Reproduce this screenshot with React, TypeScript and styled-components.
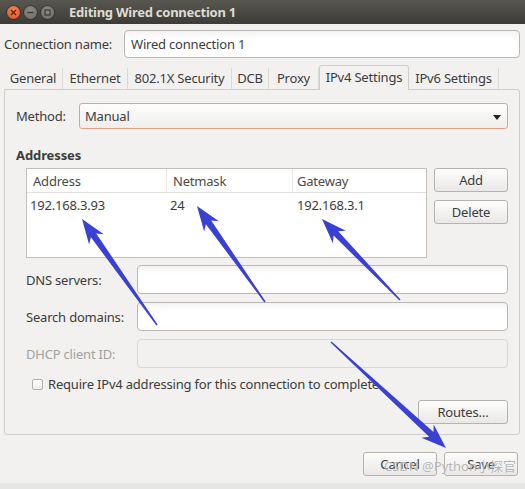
import React from "react";
import styled, { createGlobalStyle } from "styled-components";

const Global = createGlobalStyle`
  html, body { margin: 0; padding: 0; background: #f2f1f0; }
  body { width: 525px; height: 489px; overflow: hidden; }
  * { box-sizing: border-box; }
`;

const Window = styled.div`
  position: relative;
  width: 525px;
  height: 489px;
  background: #f2f1f0;
  display: flex;
  flex-direction: column;
  font-family: "Noto Sans", "DejaVu Sans", sans-serif;
  font-size: 13px;
  letter-spacing: -0.2px;
  color: #3c3c3c;
  overflow: hidden;
`;

const TitleBar = styled.div`
  height: 24px;
  flex: none;
  background: linear-gradient(#58574f, #3c3b37);
  display: flex;
  align-items: center;
  padding-left: 7px;
  gap: 4px;
`;

const WinButton = styled.div<{ $kind: "close" | "min" | "max" }>`
  width: 13px;
  height: 13px;
  border-radius: 50%;
  display: flex;
  align-items: center;
  justify-content: center;
  background: ${(p) =>
    p.$kind === "close"
      ? "radial-gradient(circle at 50% 35%, #f4895c, #df4b17)"
      : "radial-gradient(circle at 50% 35%, #8d8c87, #6a6964)"};
  box-shadow: 0 0 0 1px rgba(0, 0, 0, 0.25);
`;

const Title = styled.div`
  margin-left: 11px;
  color: #dfdbd2;
  font-weight: bold;
  font-size: 13px;
  letter-spacing: -0.25px;
`;

const Content = styled.div`
  padding: 0 5px 0 4px;
  display: flex;
  flex-direction: column;
`;

const NameRow = styled.div`
  margin-top: 6px;
  height: 28px;
  display: flex;
  align-items: center;
`;

const NameLabel = styled.div`
  width: 120px;
`;

const TextInput = styled.div<{ $disabled?: boolean }>`
  flex: 1;
  height: 100%;
  border: 1px solid ${(p) => (p.$disabled ? "#d9d7d3" : "#bbb8b3")};
  border-radius: 4px;
  background: ${(p) =>
    p.$disabled ? "#f2f1f0" : "linear-gradient(#f3f3f3, #ffffff 30%)"};
  display: flex;
  align-items: center;
  padding-left: 6px;
  color: #3c3c3c;
`;

const TabStrip = styled.div`
  margin-top: 7px;
  height: 24px;
  display: flex;
  align-items: flex-end;
  position: relative;
  z-index: 1;
`;

const Tab = styled.div<{ $w: number; $active?: boolean }>`
  width: ${(p) => p.$w}px;
  height: ${(p) => (p.$active ? 25 : 21)}px;
  margin-bottom: ${(p) => (p.$active ? -1 : 0)}px;
  display: flex;
  align-items: center;
  justify-content: center;
  padding-bottom: ${(p) => (p.$active ? 3 : 2)}px;
  border-right: 1px solid #dcdad6;
  ${(p) =>
    p.$active &&
    `
    border: 1px solid #cfcdc9;
    border-bottom: none;
    border-radius: 3px 3px 0 0;
    background: #f2f1f0;
  `}
`;

const Panel = styled.div`
  height: 346px;
  border: 1px solid #cfcdc9;
  border-radius: 0 3px 3px 3px;
  padding: 13px 11px 0 11px;
  display: flex;
  flex-direction: column;
`;

const MethodRow = styled.div`
  height: 26px;
  display: flex;
  align-items: center;
`;

const MethodLabel = styled.div`
  width: 63px;
`;

const Combo = styled.div`
  position: relative;
  flex: 1;
  height: 100%;
  border: 1px solid #e3a185;
  border-radius: 3px;
  background: linear-gradient(#fdfdfd, #efeeed);
  display: flex;
  align-items: center;
  padding-left: 5px;
`;

const ComboArrow = styled.div`
  position: absolute;
  right: 6px;
  top: 11px;
  width: 0;
  height: 0;
  border-left: 4px solid transparent;
  border-right: 4px solid transparent;
  border-top: 5px solid #222;
`;

const SectionTitle = styled.div`
  margin-top: 18px;
  line-height: 17px;
  font-weight: bold;
  letter-spacing: -0.1px;
`;

const AddrRow = styled.div`
  margin: 4px 0 0 10px;
  display: flex;
  gap: 7px;
`;

const Table = styled.div`
  width: 401px;
  height: 90px;
  background: #fff;
  border: 1px solid #c2bfba;
  display: flex;
  flex-direction: column;
`;

const TRow = styled.div<{ $header?: boolean }>`
  display: grid;
  grid-template-columns: 140px 126px 1fr;
  height: ${(p) => (p.$header ? 24 : 22)}px;
  ${(p) => p.$header && "border-bottom: 1px solid #e2e0dd;"}
`;

const HeadCell = styled.div`
  display: flex;
  align-items: center;
  padding-left: 6px;
  color: #4a4a4a;
  border-right: 1px solid #e8e6e3;
  &:last-child { border-right: none; padding-left: 4px; }
`;

const Cell = styled.div`
  display: flex;
  align-items: center;
  padding: 0 0 0 3px;
  margin-top: 1px;
  &:last-child { padding-left: 4px; }
`;

const ButtonCol = styled.div`
  display: flex;
  flex-direction: column;
  gap: 8px;
`;

const Button = styled.div<{ $w?: number }>`
  width: ${(p) => p.$w ?? 74}px;
  height: 24px;
  border: 1px solid #b6b3ae;
  border-radius: 3px;
  background: linear-gradient(#fdfdfd, #e9e8e6);
  display: flex;
  align-items: center;
  justify-content: center;
  box-shadow: inset 0 1px 0 #fff;
`;

const FormGrid = styled.div`
  margin: 7px 0 0 10px;
  display: grid;
  grid-template-columns: 111px 1fr;
  grid-auto-rows: 29px;
  row-gap: 8px;
`;

const FormLabel = styled.div<{ $disabled?: boolean }>`
  display: flex;
  align-items: center;
  color: ${(p) => (p.$disabled ? "#a3a19d" : "#3c3c3c")};
`;

const CheckRow = styled.div`
  margin: 10px 0 0 16px;
  height: 12px;
  display: flex;
  align-items: center;
  gap: 5px;
`;

const CheckBox = styled.div`
  width: 11px;
  height: 11px;
  border: 1px solid #b4b1ad;
  border-radius: 2px;
  background: linear-gradient(#fff, #eeedec);
`;

const RoutesWrap = styled.div`
  margin-top: 10px;
  display: flex;
  justify-content: flex-end;
`;

const Footer = styled.div`
  margin-top: 17px;
  padding-right: 2px;
  display: flex;
  justify-content: flex-end;
  gap: 7px;
`;

const BottomStrip = styled.div`
  margin-top: auto;
  height: 6px;
  background: #e6e6e5;
`;

const Watermark = styled.div`
  position: absolute;
  left: 384px;
  top: 456px;
  white-space: nowrap;
  font-size: 13px;
  letter-spacing: 0;
  color: rgba(150, 150, 150, 0.7);
  font-family: "Noto Sans", "Noto Sans CJK SC", sans-serif;
  text-shadow: 0 0 1px rgba(255, 255, 255, 0.8);
  pointer-events: none;
`;

const Overlay = styled.svg`
  position: absolute;
  left: 0;
  top: 0;
  pointer-events: none;
`;

function arrowPoints(tx: number, ty: number, px: number, py: number): string {
  const dx = px - tx;
  const dy = py - ty;
  const len = Math.hypot(dx, dy);
  const ux = dx / len;
  const uy = dy / len;
  const nx = -uy;
  const ny = ux;
  const L = 20;
  const back = 5;
  const W = 9;
  const sw = 3.2;
  const tw = 0.7;
  const nb = { x: px - ux * L, y: py - uy * L };
  const bb = { x: px - ux * (L + back), y: py - uy * (L + back) };
  const pts = [
    [px, py],
    [bb.x + nx * W, bb.y + ny * W],
    [nb.x + nx * sw, nb.y + ny * sw],
    [tx + nx * tw, ty + ny * tw],
    [tx - nx * tw, ty - ny * tw],
    [nb.x - nx * sw, nb.y - ny * sw],
    [bb.x - nx * W, bb.y - ny * W],
  ];
  return pts.map((p) => `${p[0].toFixed(1)},${p[1].toFixed(1)}`).join(" ");
}

const arrows: [number, number, number, number][] = [
  [157, 325, 82, 219],
  [265, 302, 197, 206],
  [400, 300, 322, 219],
  [331, 342, 446, 448],
];

const tabs = [
  { label: "General", w: 59 },
  { label: "Ethernet", w: 65 },
  { label: "802.1X Security", w: 104 },
  { label: "DCB", w: 37 },
  { label: "Proxy", w: 50 },
  { label: "IPv4 Settings", w: 90, active: true },
  { label: "IPv6 Settings", w: 90 },
];

export default function App() {
  return (
    <Window>
      <Global />
      <TitleBar>
        <WinButton $kind="close">
          <svg width="7" height="7" viewBox="0 0 7 7">
            <path d="M1 1L6 6M6 1L1 6" stroke="#5a1c08" strokeWidth="1.3" />
          </svg>
        </WinButton>
        <WinButton $kind="min">
          <svg width="7" height="7" viewBox="0 0 7 7">
            <path d="M0.5 3.5H6.5" stroke="#3a3935" strokeWidth="1.5" />
          </svg>
        </WinButton>
        <WinButton $kind="max">
          <svg width="7" height="7" viewBox="0 0 7 7">
            <rect x="1" y="1" width="5" height="5" fill="none" stroke="#3a3935" strokeWidth="1.2" />
          </svg>
        </WinButton>
        <Title>Editing Wired connection 1</Title>
      </TitleBar>
      <Content>
        <NameRow>
          <NameLabel>Connection name:</NameLabel>
          <TextInput>Wired connection 1</TextInput>
        </NameRow>
        <TabStrip>
          {tabs.map((t) => (
            <Tab key={t.label} $w={t.w} $active={t.active}>
              {t.label}
            </Tab>
          ))}
        </TabStrip>
        <Panel>
          <MethodRow>
            <MethodLabel>Method:</MethodLabel>
            <Combo>
              Manual
              <ComboArrow />
            </Combo>
          </MethodRow>
          <SectionTitle>Addresses</SectionTitle>
          <AddrRow>
            <Table>
              <TRow $header>
                <HeadCell>Address</HeadCell>
                <HeadCell>Netmask</HeadCell>
                <HeadCell>Gateway</HeadCell>
              </TRow>
              <TRow>
                <Cell>192.168.3.93</Cell>
                <Cell>24</Cell>
                <Cell>192.168.3.1</Cell>
              </TRow>
            </Table>
            <ButtonCol>
              <Button>Add</Button>
              <Button>Delete</Button>
            </ButtonCol>
          </AddrRow>
          <FormGrid>
            <FormLabel>DNS servers:</FormLabel>
            <TextInput />
            <FormLabel>Search domains:</FormLabel>
            <TextInput />
            <FormLabel $disabled>DHCP client ID:</FormLabel>
            <TextInput $disabled />
          </FormGrid>
          <CheckRow>
            <CheckBox />
            <span>Require IPv4 addressing for this connection to complete</span>
          </CheckRow>
          <RoutesWrap>
            <Button $w={90}>Routes…</Button>
          </RoutesWrap>
        </Panel>
        <Footer>
          <Button>Cancel</Button>
          <Button>Save</Button>
        </Footer>
      </Content>
      <BottomStrip />
      <Watermark>CSDN @Python小探官</Watermark>
      <Overlay width="525" height="489" viewBox="0 0 525 489">
        {arrows.map((a, i) => (
          <polygon key={i} points={arrowPoints(a[0], a[1], a[2], a[3])} fill="#3a40d4" />
        ))}
      </Overlay>
    </Window>
  );
}
